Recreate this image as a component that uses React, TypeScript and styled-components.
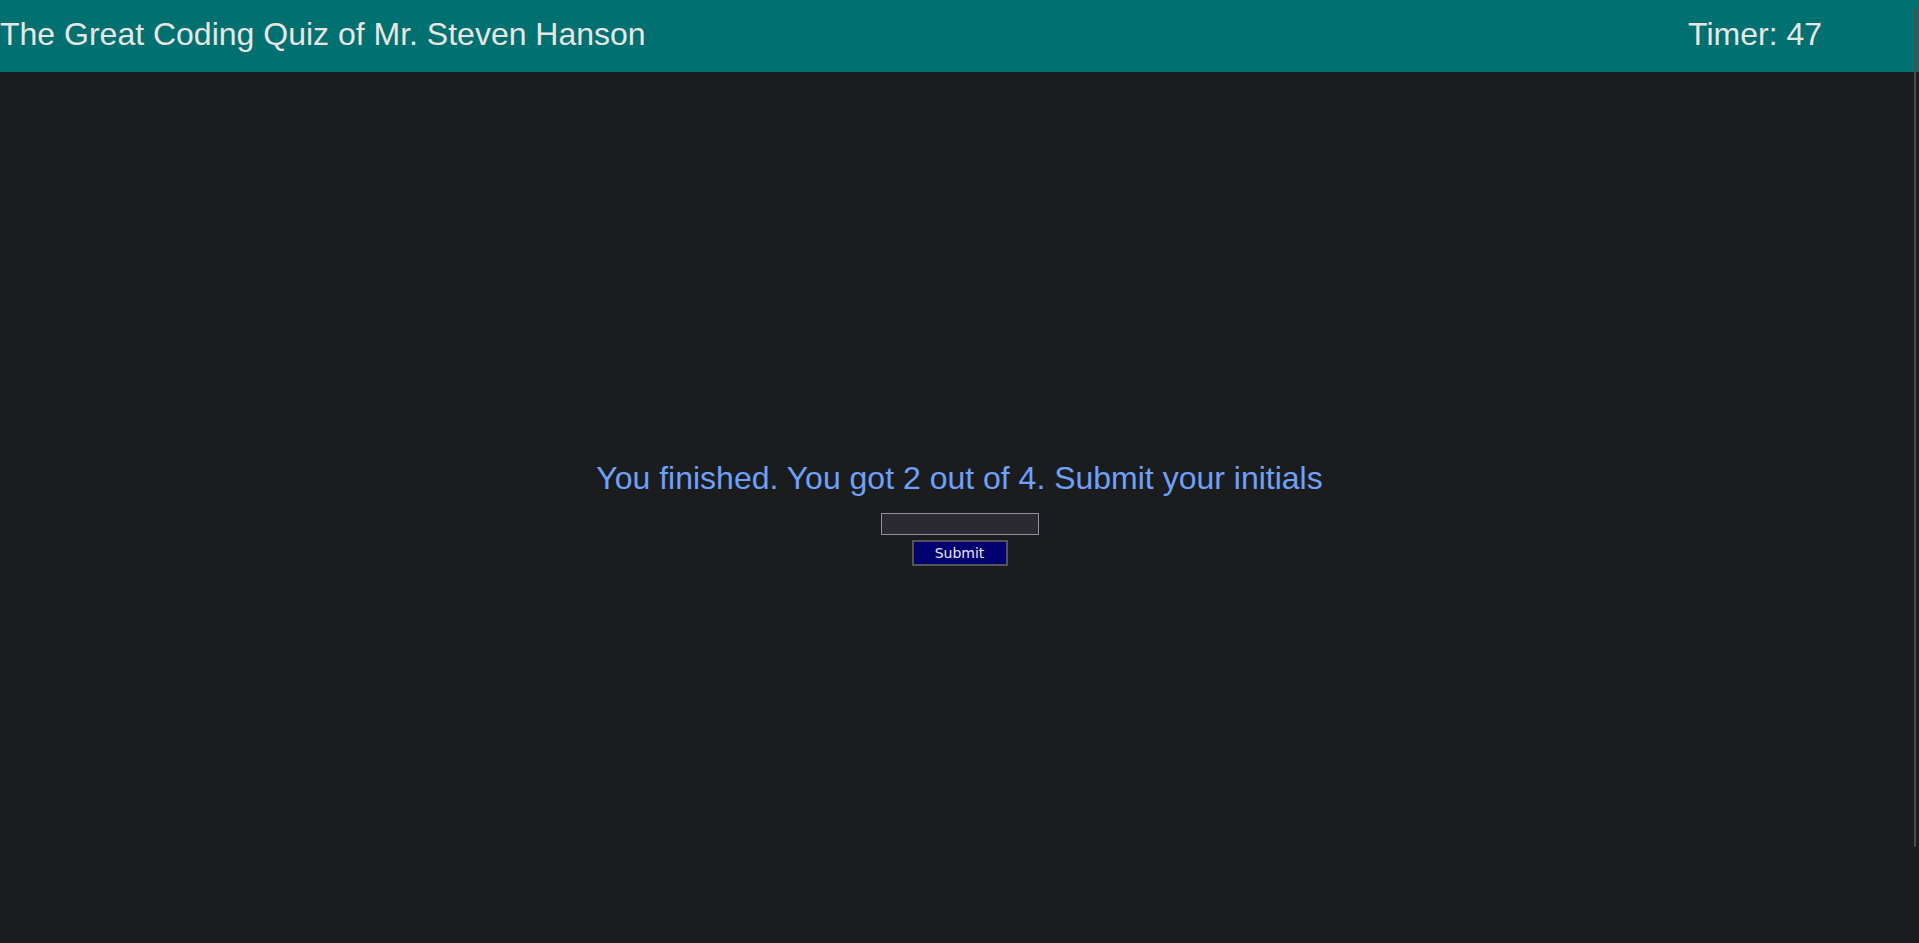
import React from "react";
import styled, { createGlobalStyle } from "styled-components";

const Global = createGlobalStyle`
  html, body {
    margin: 0;
    padding: 0;
    background: #1b1c1e;
    height: 100%;
    overflow: hidden;
  }
  body {
    font-family: "Liberation Sans", Arial, sans-serif;
    color: #e8e6e3;
  }
`;

const Page = styled.div`
  display: flex;
  flex-direction: column;
  min-height: 943px;
  background: #1b1c1e;
`;

const Header = styled.header`
  display: flex;
  align-items: center;
  justify-content: space-between;
  height: 72px;
  padding: 0 97px 0 0;
  background: #007070;
  box-sizing: border-box;
`;

const Title = styled.h1`
  margin: 0;
  font-size: 32px;
  font-weight: 400;
  line-height: 37px;
  color: #e8e6e3;
  position: relative;
  top: -2px;
`;

const Timer = styled.div`
  font-size: 32px;
  line-height: 37px;
  color: #e8e6e3;
  position: relative;
  top: -2px;
`;

const Main = styled.main`
  display: flex;
  flex-direction: column;
  align-items: center;
  padding-top: 388px;
`;

const Message = styled.h2`
  margin: 0;
  font-size: 32px;
  font-weight: 400;
  line-height: 37px;
  color: #6fa1fa;
`;

const Form = styled.form`
  display: flex;
  flex-direction: column;
  align-items: center;
  gap: 5px;
  margin-top: 16px;
`;

const Input = styled.input`
  box-sizing: border-box;
  width: 158px;
  height: 22px;
  margin: 0;
  padding: 1px 2px;
  background: #2b2a33;
  border: 1px solid #8f8f9d;
  border-radius: 0;
  color: #fbfbfe;
  outline: none;
`;

const Button = styled.button`
  box-sizing: border-box;
  width: 96px;
  height: 26px;
  margin: 0;
  padding: 0;
  background: #00006f;
  border: 2px solid #555558;
  border-radius: 0;
  color: #e8e6f3;
  font-family: "DejaVu Sans", sans-serif;
  font-size: 14px;
  line-height: 20px;
  cursor: pointer;
`;

const ScrollThumb = styled.div`
  position: fixed;
  top: 8px;
  right: 3px;
  width: 2px;
  height: 839px;
  background: #4a4d4f;
  border-radius: 1px;
`;

export default function App() {
  return (
    <>
      <Global />
      <Page>
        <Header>
          <Title>The Great Coding Quiz of Mr. Steven Hanson</Title>
          <Timer>Timer: 47</Timer>
        </Header>
        <Main>
          <Message>You finished. You got 2 out of 4. Submit your initials</Message>
          <Form onSubmit={(e) => e.preventDefault()}>
            <Input type="text" />
            <Button type="submit">Submit</Button>
          </Form>
        </Main>
      </Page>
      <ScrollThumb />
    </>
  );
}
